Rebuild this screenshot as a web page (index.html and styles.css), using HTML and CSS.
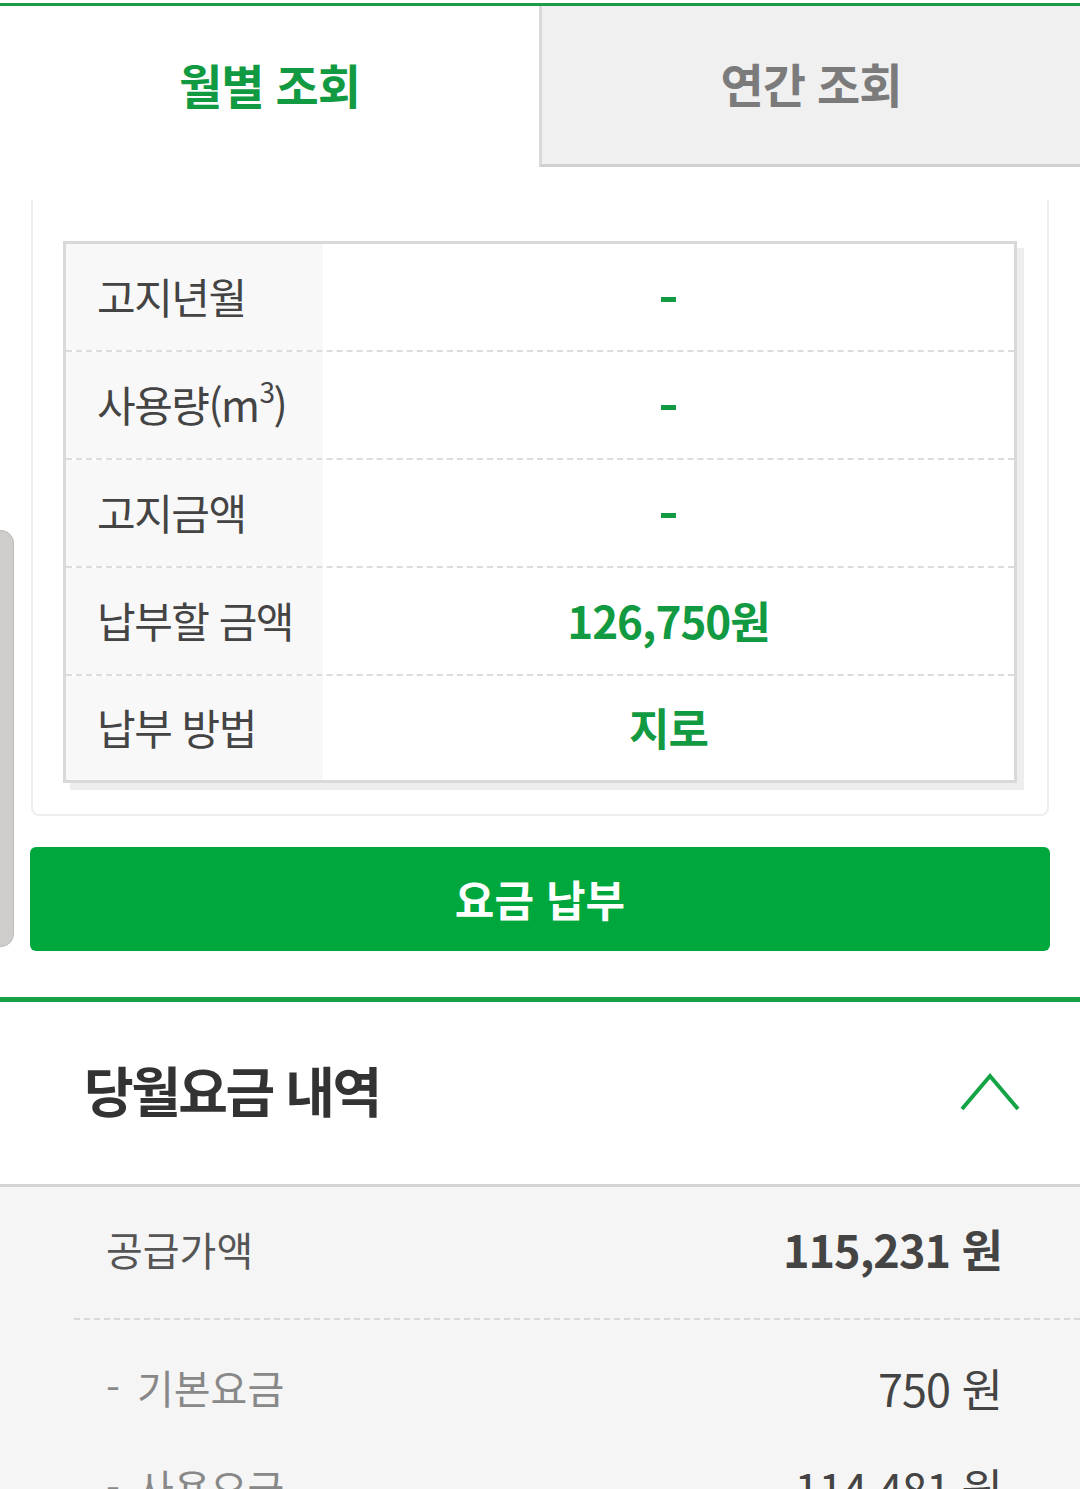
FILE: index.html
```html
<!DOCTYPE html>
<html lang="ko">
<head>
<meta charset="utf-8">
<link rel="stylesheet" href="styles.css">
</head>
<body>
<div class="page">
  <div class="topline"></div>
  <div class="tabs">
    <div class="tab tab-active">월별 조회</div>
    <div class="tab tab-off">연간 조회</div>
  </div>

  <div class="card">
    <div class="info">
      <div class="row"><div class="lab">고지년월</div><div class="val"><span class="dash"></span></div></div>
      <div class="row"><div class="lab">사용량(m<sup>3</sup>)</div><div class="val"><span class="dash"></span></div></div>
      <div class="row"><div class="lab">고지금액</div><div class="val"><span class="dash"></span></div></div>
      <div class="row"><div class="lab">납부할 금액</div><div class="val">126,750원</div></div>
      <div class="row"><div class="lab">납부 방법</div><div class="val">지로</div></div>
    </div>
  </div>

  <button class="pay">요금 납부</button>

  <div class="greenline"></div>

  <div class="sect-head">
    <h2>당월요금 내역</h2>
    <svg class="chev" width="62" height="42" viewBox="0 0 62 42"><polyline points="2,37 30,4 58,37" fill="none" stroke="#14a345" stroke-width="4"/></svg>
  </div>

  <div class="detail">
    <div class="drow main"><span class="dl">공급가액</span><span class="dv">115,231 원</span></div>
    <div class="subs">
      <div class="drow sub"><span class="dl"><span class="hy">-</span>기본요금</span><span class="dv">750 원</span></div>
      <div class="drow sub"><span class="dl"><span class="hy">-</span>사용요금</span><span class="dv">114,481 원</span></div>
    </div>
  </div>

  <div class="sidebar"></div>
</div>
</body>
</html>
```
FILE: styles.css
```css
html, body { margin: 0; padding: 0; background: #fff; }
body { font-family: "Noto Sans CJK KR", "Noto Sans", sans-serif; }
.page { position: relative; width: 1080px; height: 1489px; overflow: hidden; }

.topline { height: 3px; margin-top: 3px; background: #1c9a48; }

.tabs { display: flex; height: 161px; }
.tab { display: flex; align-items: center; justify-content: center; font-size: 47px; font-weight: 700; letter-spacing: -1px; padding-bottom: 6px; box-sizing: border-box; }
.tab-active { width: 539px; color: #119a41; background: #fff; }
.tab-off { flex: 1; color: #7b7b7b; background: #f0f0f0; border-left: 3px solid #d9d9d9; border-bottom: 3px solid #d0d0d0; }

.card { margin: 33px 31px 0; border: 2px solid #eeeeee; border-top: none; border-radius: 0 0 8px 8px; padding: 41px 30px 31px; }
.info { border: 3px solid #d9d9d9; box-shadow: 7px 7px 0 #eeeeee; background: #fff; }
.row { display: flex; height: 106px; border-bottom: 2px dashed #dcdcdc; }
.row:last-child { border-bottom: none; height: 104px; }
.lab { width: 226px; padding-left: 31px; padding-bottom: 4px; box-sizing: content-box; background: #f8f8f8; display: flex; align-items: center; font-size: 42px; color: #444; letter-spacing: -1.5px; }
.lab sup { font-size: 28px; line-height: 0; position: relative; top: -12px; margin-left: 1px; vertical-align: baseline; }
.val { flex: 1; display: flex; align-items: center; justify-content: center; font-size: 44px; font-weight: 700; color: #119a41; letter-spacing: -1px; padding-bottom: 2px; }
.dash { display: block; width: 15px; height: 5px; background: #119a41; margin-top: 6px; }

.pay { display: block; margin: 31px 30px 0; width: 1020px; height: 104px; border: none; border-radius: 6px; background: #00a73c; color: #fff; font-family: inherit; font-size: 43px; font-weight: 700; letter-spacing: 0; padding: 0 0 2px; }

.greenline { height: 5px; margin-top: 46px; background: #17a046; }

.sect-head { box-sizing: border-box; display: flex; align-items: center; justify-content: space-between; padding: 0 58px 8px 84px; border-bottom: 3px solid #d4d4d4; height: 185px; }
.sect-head h2 { margin: 0; font-size: 54px; font-weight: 700; color: #333; letter-spacing: -2.5px; }
.chev { display: block; margin-top: 8px; }

.detail { background: #f5f5f5; padding-left: 74px; height: 400px; }
.drow { display: flex; justify-content: space-between; align-items: center; padding: 0 78px 0 32px; }
.main { padding-bottom: 8px; box-sizing: border-box; border-bottom: 2px dashed #d9d9d9; height: 133px; }
.main .dl { font-size: 40px; color: #555; letter-spacing: 0; }
.main .dv { font-size: 45px; font-weight: 700; color: #444; letter-spacing: -1px; }
.subs { padding-top: 17px; }
.sub { height: 100px; }
.sub .dl { font-size: 40px; color: #888; letter-spacing: 0; }
.hy { display: inline-block; width: 31px; }
.sub .dv { font-size: 45px; color: #444; letter-spacing: -1px; }

.sidebar { position: absolute; left: -2px; top: 530px; width: 14px; height: 415px; background: #cfcdcb; border: 1px solid #bdbbb9; border-radius: 0 13px 13px 0; }
```
